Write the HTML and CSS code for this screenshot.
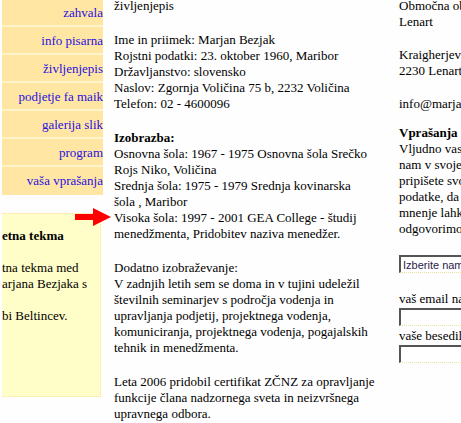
FILE: index.html
```html
<!DOCTYPE html>
<html lang="sl">
<head>
    <meta charset="UTF-8">
    <meta name="viewport" content="width=device-width, initial-scale=1.0">
    <title>življenjepis</title>
    <link rel="stylesheet" href="styles.css">
</head>
<body>
    <div class="page">
        <div class="sidebar">
            <nav class="menu">
                <a href="#">zahvala</a>
                <a href="#">info pisarna</a>
                <a href="#">življenjepis</a>
                <a href="#">podjetje fa maik</a>
                <a href="#">galerija slik</a>
                <a href="#">program</a>
                <a href="#">vaša vprašanja</a>
            </nav>
            <div class="news">
                <p><b>etna tekma</b></p>
                <p>tna tekma med<br>arjana Bezjaka s</p>
                <p>bi Beltincev.</p>
                <svg class="arrow" width="36" height="18" viewBox="0 0 36 18" aria-hidden="true">
                    <path d="M0 6h18V0l18 9-18 9v-6H0z" fill="#f00"/>
                </svg>
            </div>
        </div>

        <main class="content">
            <p>življenjepis</p>
            <p>Ime in priimek: Marjan Bezjak<br>
            Rojstni podatki: 23. oktober 1960, Maribor<br>
            Državljanstvo: slovensko<br>
            Naslov: Zgornja Voličina 75 b, 2232 Voličina<br>
            Telefon: 02 - 4600096</p>
            <p><b>Izobrazba:</b><br>
            Osnovna šola: 1967 - 1975 Osnovna šola Srečko<br>
            Rojs Niko, Voličina<br>
            Srednja šola: 1975 - 1979 Srednja kovinarska<br>
            šola , Maribor<br>
            Visoka šola: 1997 - 2001 GEA College - študij<br>
            menedžmenta, Pridobitev naziva menedžer.</p>
            <p>Dodatno izobraževanje:<br>
            V zadnjih letih sem se doma in v tujini udeležil<br>
            številnih seminarjev s področja vodenja in<br>
            upravljanja podjetij, projektnega vodenja,<br>
            komuniciranja, projektnega vodenja, pogajalskih<br>
            tehnik in menedžmenta.</p>
            <p>Leta 2006 pridobil certifikat ZČNZ za opravljanje<br>
            funkcije člana nadzornega sveta in neizvršnega<br>
            upravnega odbora.</p>
        </main>

        <aside class="contact">
            <p>Območna ob<br>Lenart</p>
            <p>Kraigherjeva<br>2230 Lenart</p>
            <p>info@marjan</p>
            <form class="ask">
                <h2>Vprašanja in</h2>
                <p>Vljudno vas<br>nam v svoje<br>pripišete svo<br>podatke, da<br>mnenje lahko<br>odgovorimo</p>
                <select class="field" aria-label="Izberite namen">
                    <option>Izberite namen</option>
                </select>
                <label for="email">vaš email nas</label>
                <input class="field" type="text" id="email">
                <label for="text">vaše besedilo</label>
                <input class="field" type="text" id="text">
            </form>
        </aside>
    </div>
</body>
</html>
```

FILE: styles.css
```css
body {
    margin: 0;
    background: #fefefe;
    color: #000;
    font-family: "Liberation Serif", "Times New Roman", serif;
    font-size: 13px;
    line-height: 16px;
}
p {
    margin: 0;
}
.page {
    display: flex;
    align-items: flex-start;
    padding-left: 2px;
    white-space: nowrap;
    overflow: hidden;
}

/* left column */
.sidebar {
    flex: 0 0 101px;
}
.menu {
    display: flex;
    flex-direction: column;
    gap: 2px;
    background: #fff5cc;
}
.menu a {
    padding: 6px 0 4px;
    background: #ffe6a2;
    color: #2a10e0;
    text-align: right;
    text-decoration: none;
}
.menu a:first-child {
    padding-top: 5px;
}
.menu a:last-child {
    padding-bottom: 6px;
}
.news {
    position: relative;
    display: flex;
    flex-direction: column;
    gap: 16px;
    margin: 18px 2px 0 0;
    padding: 14px 0 72px;
    background: #fffdc8;
    border: 1px dotted #ffe0a0;
    border-left: none;
}
.arrow {
    position: absolute;
    top: -6px;
    right: -11px;
}

/* biography */
.content {
    display: flex;
    flex-direction: column;
    gap: 18px;
    flex: 0 0 296px;
    box-sizing: border-box;
    padding-left: 11px;
    margin-top: -2px;
}

/* right column */
.contact {
    flex: 1;
    min-width: 0;
    display: flex;
    flex-direction: column;
    gap: 17px;
    margin-top: -2px;
}
.ask {
    display: flex;
    flex-direction: column;
    margin-top: -4px;
}
.ask h2 {
    margin: 0;
    font-size: 13px;
}
.field {
    box-sizing: border-box;
    width: 160px;
    height: 18px;
    padding: 0 2px;
    border: 1px solid #e8e4a0;
    border-top: 2px solid #555;
    border-left: 2px solid #555;
    border-bottom-style: dotted;
    border-radius: 0;
    background: #fff;
    color: #2b1c4c;
    font-family: "Liberation Sans", Arial, sans-serif;
    font-size: 11px;
    appearance: none;
}
select.field {
    margin: 18px 0 16px;
}
label {
    line-height: 19px;
}
```
